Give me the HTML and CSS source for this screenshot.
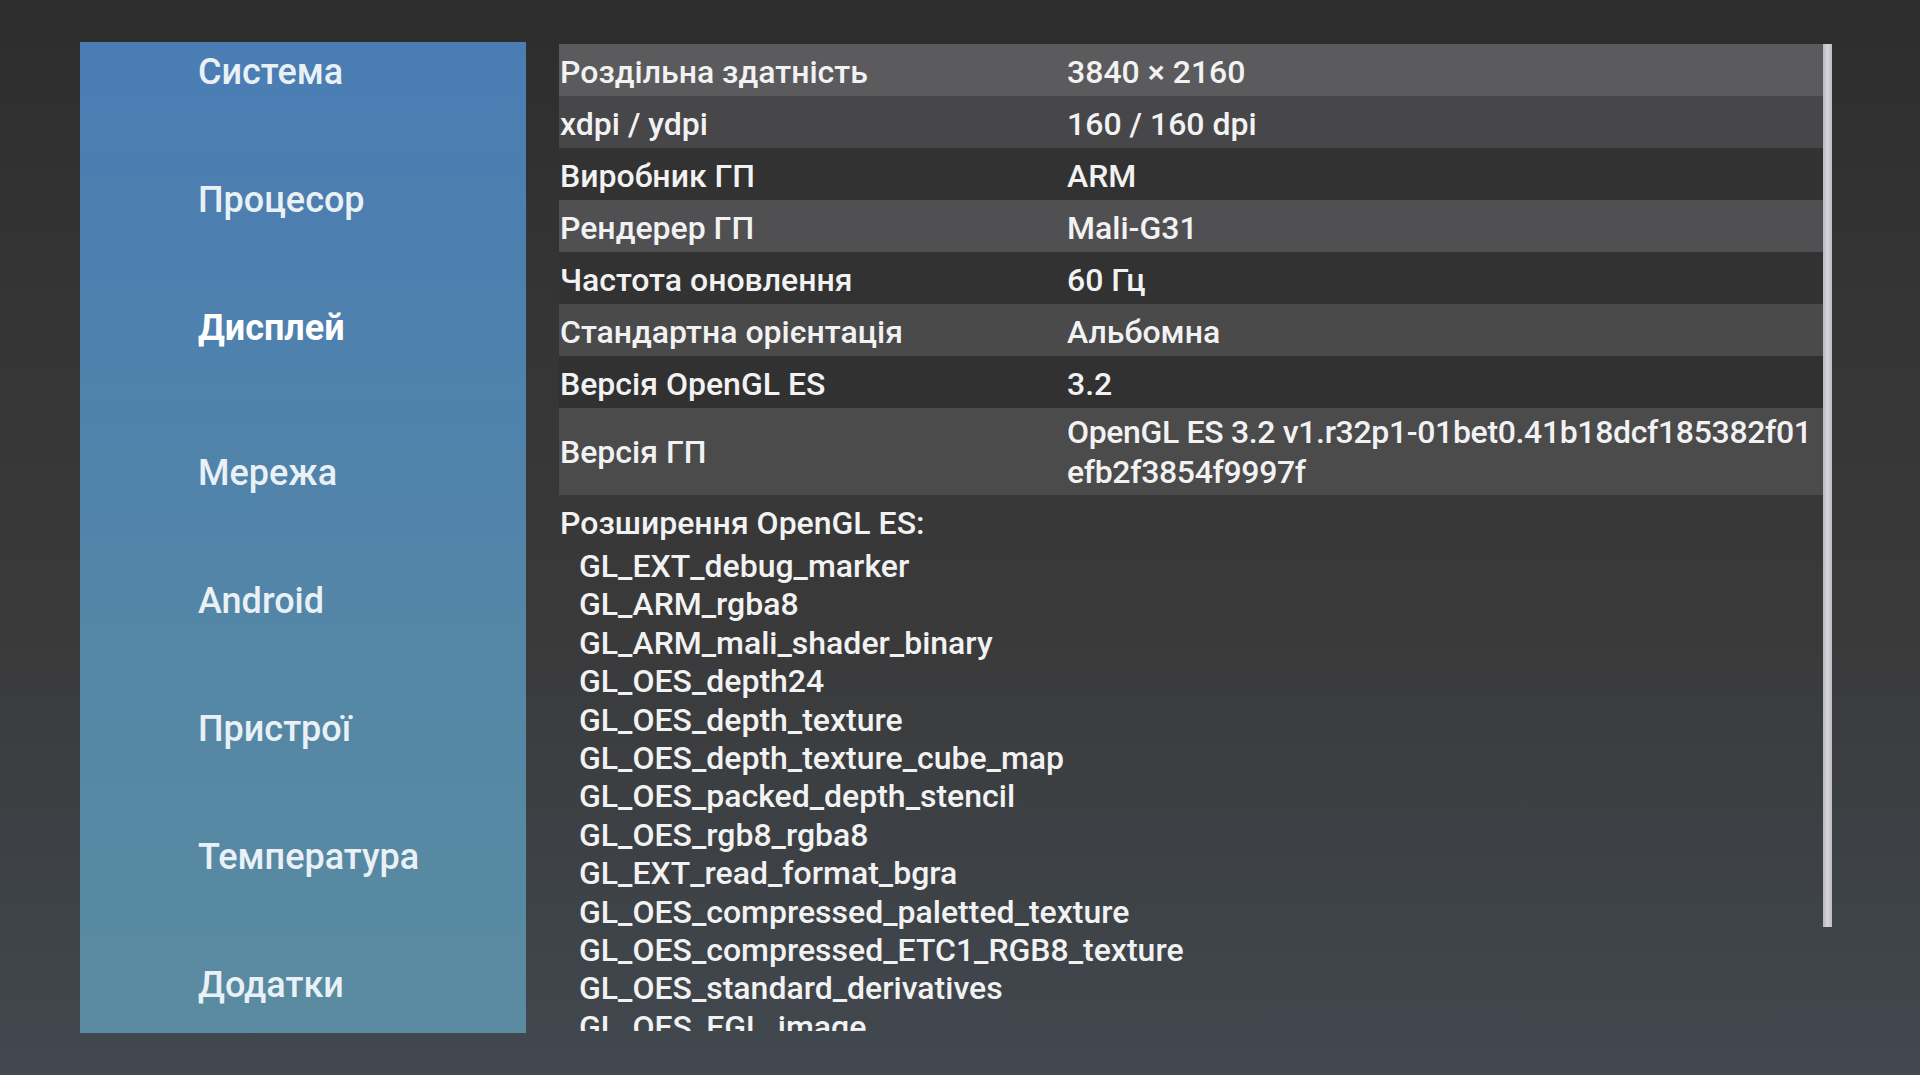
FILE: index.html
```html
<!DOCTYPE html>
<html lang="uk">
<head>
<meta charset="utf-8">
<title>Дисплей</title>
<link rel="stylesheet" href="styles.css">
</head>
<body>
<div class="screen">
  <nav class="sidebar">
    <div class="nav-item">Система</div>
    <div class="nav-item">Процесор</div>
    <div class="nav-item active">Дисплей</div>
    <div class="nav-item">Мережа</div>
    <div class="nav-item">Android</div>
    <div class="nav-item">Пристрої</div>
    <div class="nav-item">Температура</div>
    <div class="nav-item">Додатки</div>
  </nav>
  <main class="content">
    <div class="scroll">
      <div class="row r1"><div class="label">Роздільна здатність</div><div class="value">3840 × 2160</div></div>
      <div class="row r2"><div class="label">xdpi / ydpi</div><div class="value">160 / 160 dpi</div></div>
      <div class="row r3"><div class="label">Виробник ГП</div><div class="value">ARM</div></div>
      <div class="row r4"><div class="label">Рендерер ГП</div><div class="value">Mali-G31</div></div>
      <div class="row r5"><div class="label">Частота оновлення</div><div class="value">60 Гц</div></div>
      <div class="row r6"><div class="label">Стандартна орієнтація</div><div class="value">Альбомна</div></div>
      <div class="row r7"><div class="label">Версія OpenGL ES</div><div class="value">3.2</div></div>
      <div class="row r8 tall"><div class="label">Версія ГП</div><div class="value long">OpenGL ES 3.2 v1.r32p1-01bet0.41b18dcf185382f01<br>efb2f3854f9997f</div></div>
      <div class="ext-title">Розширення OpenGL ES:</div>
      <ul class="ext-list">
        <li>GL_EXT_debug_marker</li>
        <li>GL_ARM_rgba8</li>
        <li>GL_ARM_mali_shader_binary</li>
        <li>GL_OES_depth24</li>
        <li>GL_OES_depth_texture</li>
        <li>GL_OES_depth_texture_cube_map</li>
        <li>GL_OES_packed_depth_stencil</li>
        <li>GL_OES_rgb8_rgba8</li>
        <li>GL_EXT_read_format_bgra</li>
        <li>GL_OES_compressed_paletted_texture</li>
        <li>GL_OES_compressed_ETC1_RGB8_texture</li>
        <li>GL_OES_standard_derivatives</li>
        <li>GL_OES_EGL_image</li>
      </ul>
    </div>
    <div class="scrollbar"><div class="thumb"></div></div>
  </main>
</div>
</body>
</html>
```
FILE: styles.css
```css
html, body {
  margin: 0;
  padding: 0;
}
body {
  width: 1920px;
  height: 1075px;
  overflow: hidden;
  background: linear-gradient(to bottom, #2d2d2e 0%, #353535 30%, #3a3a3b 60%, #3e4348 85%, #41484f 100%);
  font-family: Roboto, "Noto Sans", "Liberation Sans", sans-serif;
  font-weight: 500;
  color: #f2f2f2;
}
.screen {
  display: flex;
  padding: 42px 0 0 80px;
  gap: 33px;
}
.sidebar {
  width: 446px;
  height: 991px;
  box-sizing: border-box;
  padding: 6px 0 0 118px;
  background: linear-gradient(to bottom, #4a7db3 0%, #4e81ad 30%, #5486a7 60%, #5a8ba0 100%);
  overflow: hidden;
  display: flex;
  flex-direction: column;
}
.nav-item {
  height: 48px;
  line-height: 48px;
  margin-bottom: 80px;
  font-size: 36px;
  color: #e9f1f6;
  white-space: nowrap;
}
.nav-item.active {
  font-weight: bold;
  color: #ffffff;
  margin-bottom: 97px;
}
.content {
  display: flex;
  margin-top: 2px;
  height: 987px;
}
.scroll {
  width: 1264px;
  height: 987px;
  overflow: hidden;
}
.row {
  display: grid;
  grid-template-columns: 507px 1fr;
  padding: 8px 0 4px 1px;
  font-size: 32px;
  line-height: 40px;
  white-space: nowrap;
}
.r1 { background: #5b5b5d; }
.r2 { background: #474749; }
.r3 { background: #323233; }
.r4 { background: #505052; }
.r5 { background: #323233; }
.r6 { background: #4a4a4b; }
.r7 { background: #313132; }
.r8 { background: #4b4b4c; }
.tall {
  align-items: center;
  padding: 4px 0 3px 1px;
}
.value.long {
  letter-spacing: -0.35px;
}
.ext-title {
  margin-top: 9px;
  padding-left: 1px;
  font-size: 32px;
  line-height: 38px;
}
.ext-list {
  list-style: none;
  margin: 5px 0 0 0;
  padding: 0 0 0 20px;
  font-size: 32px;
  line-height: 38.4px;
}
.scrollbar {
  width: 9px;
  height: 987px;
}
.thumb {
  width: 9px;
  height: 883px;
  background: linear-gradient(to right, #b9b9bd, #d6d6da 50%, #bdbdc1);
}
```
